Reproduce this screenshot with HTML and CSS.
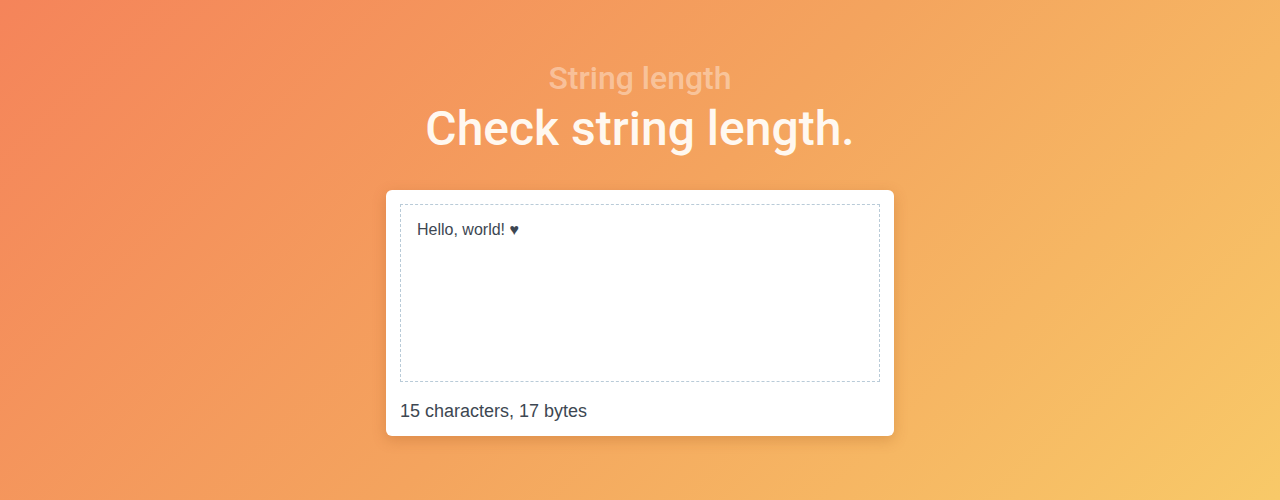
FILE: index.html
```html
<!DOCTYPE html>
<html>
<head>
<meta charset="utf-8">
<link rel="stylesheet" href="styles.css">
</head>
<body>
<main class="page">
  <header class="hero">
    <h2 class="eyebrow">String length</h2>
    <h1 class="title">Check string length.</h1>
  </header>
  <section class="card">
    <textarea class="input">Hello, world! ♥</textarea>
    <p class="result">15 characters, 17 bytes</p>
  </section>
</main>
</body>
</html>
```

FILE: styles.css
```css
html, body {
  margin: 0;
  height: 100%;
}
body {
  background: linear-gradient(135deg, #f5845a 0%, #f4a45e 50%, #f8c968 100%);
  font-family: Roboto, "Liberation Sans", sans-serif;
  overflow: hidden;
}
.page {
  display: flex;
  flex-direction: column;
  align-items: center;
  padding-top: 60px;
}
.hero {
  text-align: center;
}
.eyebrow {
  margin: 0;
  font-size: 32px;
  font-weight: 500;
  line-height: 36px;
  color: rgba(255, 255, 255, 0.4);
}
.title {
  margin: 4px 0 0;
  font-size: 48px;
  font-weight: 500;
  line-height: 58px;
  color: #fff8f0;
}
.card {
  margin-top: 32px;
  width: 480px;
  padding: 14px;
  background: #fff;
  border-radius: 6px;
  box-shadow: 0 4px 14px rgba(150, 70, 20, 0.25);
}
.input {
  display: block;
  box-sizing: border-box;
  width: 480px;
  height: 178px;
  margin: 0;
  padding: 16px;
  border: 1px dashed #b9cbd8;
  resize: none;
  outline: none;
  font-family: "Liberation Sans", Arial, sans-serif;
  font-size: 16px;
  color: #3d4752;
}
.result {
  margin: 18px 0 0;
  font-family: "Liberation Sans", Arial, sans-serif;
  font-size: 18px;
  line-height: 22px;
  color: #3d4752;
}
```
